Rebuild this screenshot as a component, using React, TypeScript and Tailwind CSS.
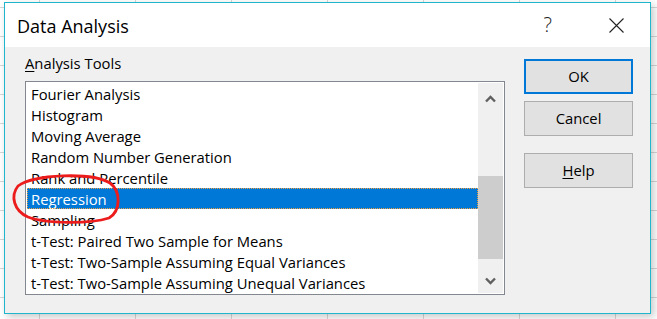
import React from 'react';

const tools: string[] = [
  'Fourier Analysis',
  'Histogram',
  'Moving Average',
  'Random Number Generation',
  'Rank and Percentile',
  'Regression',
  'Sampling',
  't-Test: Paired Two Sample for Means',
  't-Test: Two-Sample Assuming Equal Variances',
  't-Test: Two-Sample Assuming Unequal Variances',
];

const Chevron: React.FC<{ down?: boolean }> = ({ down }) => (
  <svg width="11" height="8" viewBox="0 0 11 8" className={down ? 'rotate-180' : ''}>
    <path d="M1 6.5 L5.5 2 L10 6.5" fill="none" stroke="#606060" strokeWidth="2.4" />
  </svg>
);

const App: React.FC = () => {
  const selected = 'Regression';

  return (
    <div className="relative w-[657px] h-[319px] overflow-hidden bg-white bg-[linear-gradient(to_right,#d6d6d6_1px,transparent_1px),linear-gradient(to_bottom,#d6d6d6_1px,transparent_1px)] bg-[size:96px_29px] bg-[position:39px_7px] font-['Open_Sans',sans-serif] text-black">
      {/* dialog window */}
      <div className="absolute left-[4px] top-[2px] w-[647px] h-[312px] border border-[#1fb6cb] bg-[#f0f0f0] shadow-[3px_3px_8px_rgba(0,0,0,0.22)] flex flex-col">
        <div className="h-[44px] bg-white flex items-center pl-[12px] shrink-0">
          <span className="text-[18px] leading-[26px] pt-[1px]">Data Analysis</span>
          <span className="ml-auto text-[20px] font-light leading-[26px] text-[#222]">?</span>
          <svg width="15" height="15" viewBox="0 0 15 15" className="ml-[57px] mr-[26px]">
            <path d="M0.5 0.5 L14.5 14.5 M14.5 0.5 L0.5 14.5" stroke="#222" strokeWidth="1.1" />
          </svg>
        </div>

        <div className="flex flex-1 pl-[20px]">
          <div className="w-[480px] pt-[6px]">
            <div className="text-[14.8px] leading-[20px] mb-[8px]">
              <span className="underline underline-offset-2">A</span>nalysis Tools
            </div>
            <div className="h-[214px] border border-[#828790] bg-white p-[1px] flex">
              <div className="flex-1 flex flex-col">
                {tools.map((t) => (
                  <div
                    key={t}
                    className={`h-[21px] text-[14.8px] leading-[21px] pl-[4px] pt-[1px] whitespace-nowrap ${
                      t === selected
                        ? 'bg-[#0078d7] text-white outline-1 outline-dotted outline-[#f0a040] -outline-offset-1'
                        : ''
                    }`}
                  >
                    {t}
                  </div>
                ))}
              </div>
              <div className="w-[25px] bg-[#f0f0f0] flex flex-col">
                <div className="h-[31px] flex items-center justify-center">
                  <Chevron />
                </div>
                <div className="h-[62px]" />
                <div className="h-[83px] bg-[#cdcdcd]" />
                <div className="flex-1" />
                <div className="h-[25px] flex items-center justify-center">
                  <Chevron down />
                </div>
              </div>
            </div>
          </div>

          <div className="ml-[19px] w-[109px] pt-[12px] flex flex-col text-[14.8px]">
            <button className="h-[35px] border-2 border-[#0078d7] bg-[#e1e1e1]">OK</button>
            <button className="h-[35px] mt-[7px] border border-[#adadad] bg-[#e1e1e1]">Cancel</button>
            <button className="h-[35px] mt-[17px] border border-[#adadad] bg-[#e1e1e1]">
              <span className="underline underline-offset-2">H</span>elp
            </button>
          </div>
        </div>
      </div>

      {/* red annotation circle */}
      <svg className="absolute inset-0 pointer-events-none" width="657" height="319" viewBox="0 0 657 319">
        <path
          d="M18 186 C 34 174, 92 172, 110 183 C 121 191, 121 211, 109 218 C 90 224, 46 224, 28 217 C 14 211, 10 196, 18 186"
          fill="none"
          stroke="#ec1c1c"
          strokeWidth="2.8"
          strokeLinecap="round"
        />
      </svg>
    </div>
  );
};

export default App;
